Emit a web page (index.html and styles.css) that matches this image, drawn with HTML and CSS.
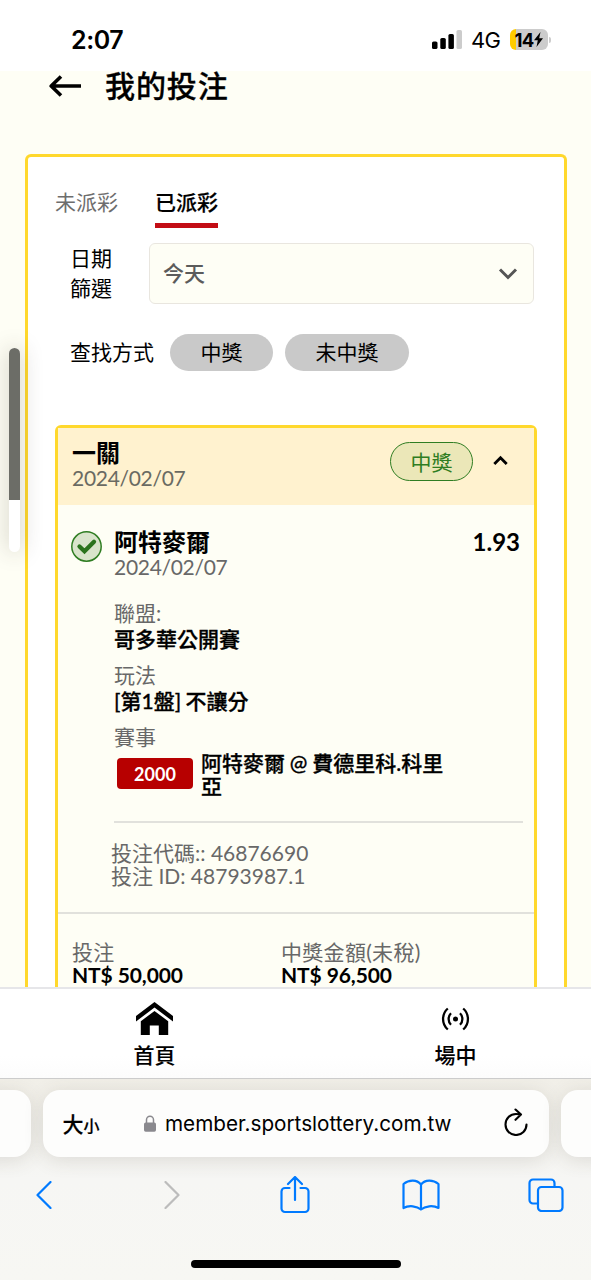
FILE: index.html
```html
<!DOCTYPE html>
<html lang="zh-Hant">
<head>
<meta charset="utf-8">
<title>我的投注</title>
<link rel="stylesheet" href="styles.css">
</head>
<body>
<div class="phone">
  <header class="status">
    <span class="clock">2:07</span>
    <div class="status-right">
      <svg class="cell" width="30" height="20" viewBox="0 0 30 20"><rect x="0" y="11.5" width="5.5" height="7.5" rx="1.6"/><rect x="8.3" y="8" width="5.5" height="11" rx="1.6"/><rect x="16.4" y="4" width="5.5" height="15" rx="1.6"/><rect x="24.5" y="0" width="5.5" height="19" rx="1.6" fill="#ccc"/></svg>
      <span class="network">4G</span>
      <div class="battery"><span>14</span><svg width="9" height="15" viewBox="0 0 9 15"><path d="M6.5 0 0 8.3h3.8L2.5 15 9 6.3H5.2z"/></svg></div>
      <i class="battery-tip"></i>
    </div>
  </header>

  <main class="page">
    <div class="page-head">
      <svg width="33" height="22" viewBox="0 0 33 22" fill="none" stroke="#000" stroke-width="3.6" stroke-linejoin="round"><path d="M2 11H32M12 1.500 2.200 11l9.800 9.500"/></svg>
      <h1>我的投注</h1>
    </div>
    <section class="panel">
      <nav class="tabs"><a>未派彩</a><a class="active">已派彩</a></nav>
      <div class="date-row">
        <label>日期<br>篩選</label>
        <div class="select"><span>今天</span><svg width="20" height="12" viewBox="0 0 20 12" fill="none" stroke="#555" stroke-width="3"><path d="m2 1.500 8 8 8-8"/></svg></div>
      </div>
      <div class="find-row"><span class="find-label">查找方式</span><button class="pill">中獎</button><button class="pill wide">未中獎</button></div>

      <article class="ticket">
        <header class="ticket-head">
          <div><h2>一關</h2><p class="date">2024/02/07</p></div>
          <span class="won">中獎</span>
          <svg width="15" height="11" viewBox="0 0 15 11" fill="none" stroke="#000" stroke-width="2.800"><path d="m1.300 9 6.200-6.300L13.700 9"/></svg>
        </header>
        <div class="bet">
          <svg class="check" width="31" height="31" viewBox="0 0 31 31" fill="none"><circle cx="15.500" cy="15.500" r="14.700" fill="#d9e4cb" stroke="#2f7d22" stroke-width="1.500"/><path d="m8.500 15.500 5 4.800 9.500-9.500" stroke="#2b731d" stroke-width="4.300" stroke-linecap="round"/></svg>
          <div class="bet-info">
            <div class="bet-top"><h2>阿特麥爾</h2><strong>1.93</strong></div>
            <p class="date">2024/02/07</p>
            <dl>
              <dt>聯盟:</dt><dd>哥多華公開賽</dd>
              <dt>玩法</dt><dd>[第1盤] 不讓分</dd>
              <dt>賽事</dt>
            </dl>
            <div class="match"><span class="code">2000</span><b>阿特麥爾 @ 費德里科.科里亞</b></div>
            <div class="ids"><p>投注代碼:: 46876690</p><p>投注 ID: 48793987.1</p></div>
          </div>
        </div>
        <footer class="sums">
          <div><span>投注</span><b>NT$ 50,000</b></div>
          <div><span>中獎金額(未稅)</span><b>NT$ 96,500</b></div>
        </footer>
      </article>
    </section>
    <div class="level"><i></i></div>
  </main>

  <nav class="site-nav">
    <a><svg width="37" height="34" viewBox="0 0 37 34"><path d="M18.500 0 37 14v5.500L18.500 5.500 0 19.500V14z"/><path d="M18.500 9 32.200 19.200V33H22.800V23.500h-9V33H4.800V19.200z"/></svg><span>首頁</span></a>
    <a><svg width="37" height="34" viewBox="0 0 37 34" fill="none" stroke="#000" stroke-width="2.300"><circle cx="18.500" cy="17" r="2.500" fill="#000" stroke="none"/><path d="M14 11.300a8 8 0 0 0 0 11.400M23 11.300a8 8 0 0 1 0 11.400M10.800 6.500a14 14 0 0 0 0 21M26.200 6.500a14 14 0 0 1 0 21"/></svg><span>場中</span></a>
  </nav>

  <footer class="browser">
    <div class="address-row">
      <div class="side-tab left"></div>
      <div class="address">
        <span class="text-size">大<small>小</small></span>
        <svg class="lock" width="12" height="17" viewBox="0 0 12 17"><path d="M2.500 9V4.700a3.500 3.500 0 0 1 7 0V9" fill="none" stroke="#8a898e" stroke-width="1.500"/><rect y="7.500" width="12" height="9.200" rx="1.700" fill="#8a898e"/></svg>
        <span class="url">member.sportslottery.com.tw</span>
        <svg class="reload" width="24" height="28" viewBox="0 0 24 28" fill="none" stroke="#000" stroke-width="2.100" stroke-linecap="round" stroke-linejoin="round"><path d="M17 6.600C15.500 6.200 14 6 12 6A10.500 10.500 0 1 0 22.500 16.500M11.500 1.500l5.500 5.100-5.500 5.200"/></svg>
      </div>
      <div class="side-tab right"></div>
    </div>
    <div class="tools">
      <svg width="16" height="28" viewBox="0 0 16 28"><path d="M14.500 1 1.500 14l13 13"/></svg>
      <svg class="muted" width="16" height="28" viewBox="0 0 16 28"><path d="m1.500 1 13 13-13 13"/></svg>
      <svg width="30" height="38" viewBox="0 0 30 38"><path d="M9.500 12H5a3.500 3.500 0 0 0-3.500 3.500v17A3.500 3.500 0 0 0 5 36h20a3.500 3.500 0 0 0 3.500-3.500v-17A3.500 3.500 0 0 0 25 12h-4.500M15 24V1.500M8 8l7-7 7 7"/></svg>
      <svg width="38" height="32" viewBox="0 0 38 32"><path d="M19 5.500v25c-4-3.500-12-4.500-17.500-1.500V5C7 .5 15 .5 19 5.500c4-5 12-5 17.500-.5v24C31 26 23 27 19 30.500"/></svg>
      <svg width="36" height="34" viewBox="0 0 36 34"><rect x="10" y="9" width="24.500" height="24" rx="3.500"/><path d="M10 25.500H5A3.500 3.500 0 0 1 1.500 22V5A3.500 3.500 0 0 1 5 1.500h18A3.500 3.500 0 0 1 26.500 5v4"/></svg>
    </div>
    <div class="home-bar"></div>
  </footer>
</div>
</body>
</html>
```
FILE: styles.css
```css
* { box-sizing: border-box; margin: 0; padding: 0; }
body { font-family: Lato, "Noto Sans CJK TC", sans-serif; font-size: 21px; color: #000; background: #fff; }
svg { display: block; flex: none; }
.phone { width: 591px; height: 1280px; display: flex; flex-direction: column; overflow: hidden; }

.status { height: 71px; flex: none; display: flex; justify-content: space-between; padding: 28px 40px 0 71px; font-family: Inter, sans-serif; }
.clock { font-size: 25px; line-height: 24px; font-weight: 600; letter-spacing: -.4px; }
.status-right { display: flex; align-items: center; height: 23px; }
.network { margin-left: 9px; width: 39px; font-size: 22px; letter-spacing: -.8px; white-space: nowrap; }
.battery { width: 38px; height: 21px; border-radius: 6px; background: linear-gradient(90deg, #fc0 6px, #ccc 6px); display: flex; align-items: center; justify-content: center; gap: 1px; font-size: 18.500px; font-weight: 700; letter-spacing: -.8px; }
.battery-tip { width: 2px; height: 6px; margin-left: 1px; border-radius: 0 3px 3px 0; background: #ccc; }

.page { height: 916px; flex: none; position: relative; background: #fefef5; }
.page-head { display: flex; align-items: center; gap: 23px; height: 30px; padding-left: 49px; }
h1 { font-size: 30px; line-height: 30px; height: 33px; font-weight: 500; letter-spacing: .9px; -webkit-text-stroke: .3px #000; }
.panel { width: 542px; height: 833px; overflow: hidden; margin: 53px 0 0 25px; border: 3px solid #ffd82c; border-bottom: 0; border-radius: 6px 6px 0 0; background: #fff; padding: 34px 27px 0; }
.tabs { display: flex; gap: 37px; height: 37px; color: #6d6d6d; line-height: 22px; }
.tabs a { height: 37px; }
.tabs .active { color: #000; font-weight: 500; border-bottom: 5px solid #c30d15; -webkit-text-stroke: .2px #000; }
.date-row { display: flex; padding: 0 0 0 15px; margin-top: 15px; }
.date-row label { width: 79px; line-height: 30px; }
.select { width: 385px; height: 61px; display: flex; align-items: center; justify-content: space-between; padding: 0 15px 0 13px; border: 1.500px solid #e9e6df; border-radius: 6px; background: #fefef5; color: #5b5b5b; font-weight: 500; }
.select span { padding-bottom: 3px; }
.find-row { display: flex; align-items: center; margin: 30px 0 0 15px; height: 37px; }
.find-label { width: 100px; padding-bottom: 3px; }
.pill { width: 103px; height: 37px; border: 0; border-radius: 19px; background: #c9c9c9; font: inherit; line-height: 34px; padding-bottom: 2px; color: #000; margin-right: 12px; }
.pill.wide { width: 124px; }

.ticket { width: 482px; margin-top: 54px; border: 3px solid #ffd82c; border-radius: 6px; background: #fefef5; }
.ticket-head { display: flex; height: 77px; background: #fff2cf; padding: 14px 26px 0 14px; }
.ticket-head > div { flex: 1; margin-top: -1px; }
.ticket-head > svg { margin: 13px 0 0 20px; }
h2 { font-size: 24px; line-height: 24px; font-weight: 600; }
.date { color: #6a6a62; line-height: 25px; letter-spacing: -.3px; }
.won { width: 83px; height: 39px; border: 1.500px solid #2f7d22; border-radius: 20px; background: #ebe7b8; color: #2f7d22; text-align: center; line-height: 37px; }
.bet { display: flex; gap: 12px; padding: 26px 14px 0 13px; height: 407px; }
.bet-info { flex: 1; margin-top: -1px; }
.bet-top { display: flex; justify-content: space-between; height: 24px; padding-right: 3px; }
.bet-top strong { font-size: 24px; line-height: 24px; }
.bet-top + .date { color: #686868; }
dl { margin-top: 21px; }
dt { color: #686868; line-height: 25px; height: 25px; }
dd { font-weight: 500; line-height: 27px; height: 26px; margin-bottom: 11px; word-spacing: -1px; -webkit-text-stroke: .3px #000; }
.match { display: flex; height: 73px; padding: 1px 0 0 3px; border-bottom: 2px solid #e1e1dc; width: 409px; margin-top: 1px; }
.code { width: 76px; height: 31px; margin: 7px 8px 0 0; border-radius: 4px; background: #b70000; color: #fff; font-size: 18px; font-weight: 700; line-height: 32px; text-align: center; }
.match b { width: 250px; font-weight: 500; line-height: 23px; word-spacing: -.5px; -webkit-text-stroke: .3px #000; }
.ids { margin: 18px 0 0 -3px; color: #686868; line-height: 23px; }
.sums { display: flex; border-top: 2px solid #e1e1dc; padding: 26px 0 40px 14px; }
.sums div { width: 209px; display: flex; flex-direction: column; line-height: 23px; white-space: nowrap; }
.sums span { color: #686868; letter-spacing: .3px; }
.sums b { letter-spacing: -.1px; }

.level { position: absolute; left: 9px; top: 277px; width: 11px; height: 204px; border-radius: 6px; background: #fff; box-shadow: 0 0 22px rgba(60, 50, 40, .28); overflow: hidden; }
.level i { display: block; height: 152px; background: #6c6d67; }

.site-nav { height: 92px; flex: none; display: flex; border-top: 2px solid #e6e6e9; border-bottom: 1px solid #ccc; background: linear-gradient(#fff 75%, #fcfcfc); padding-left: 4px; }
.site-nav a { width: 301px; flex: none; display: flex; flex-direction: column; align-items: center; padding-top: 13px; font-weight: 500; -webkit-text-stroke: .1px #000; }
.site-nav span { line-height: 30px; margin-top: 4px; }

.browser { flex: 1; background: linear-gradient(#f1efe8, #f6f6f4 50%, #f7f7f3); overflow: hidden; }
.address-row { display: flex; gap: 12px; margin: 11px -40px 0 -30.500px; height: 67px; }
.side-tab, .address { background: #fdfdfc; border-radius: 17px; box-shadow: 0 3px 20px rgba(70, 65, 50, .14); }
.side-tab { width: 61px; flex: none; }
.address { width: 506.500px; flex: none; display: flex; align-items: center; padding: 0 21px 0 20px; font-family: Inter, "Noto Sans CJK TC", sans-serif; }
.text-size { width: 80px; font-size: 21px; font-weight: 500; padding-bottom: 2px; -webkit-text-stroke: .2px #000; }
.text-size small { font-size: 16px; }
.lock { margin-left: 1px; }
.url { margin-left: 9.500px; flex: 1; font-size: 20.700px; white-space: nowrap; }
.reload { margin-bottom: 3px; }
.tools { display: grid; grid-template-columns: repeat(5, 125.500px); place-items: center; height: 38px; margin: 19px 0 0 -18.300px; }
.tools svg { fill: none; stroke: #007aff; stroke-width: 2.200; stroke-linecap: round; stroke-linejoin: round; }
.tools .muted { stroke: #bcbcbc; margin-left: 5px; }
.home-bar { width: 210px; height: 8px; margin: 46px auto 0; border-radius: 4px; background: #000; }
```
